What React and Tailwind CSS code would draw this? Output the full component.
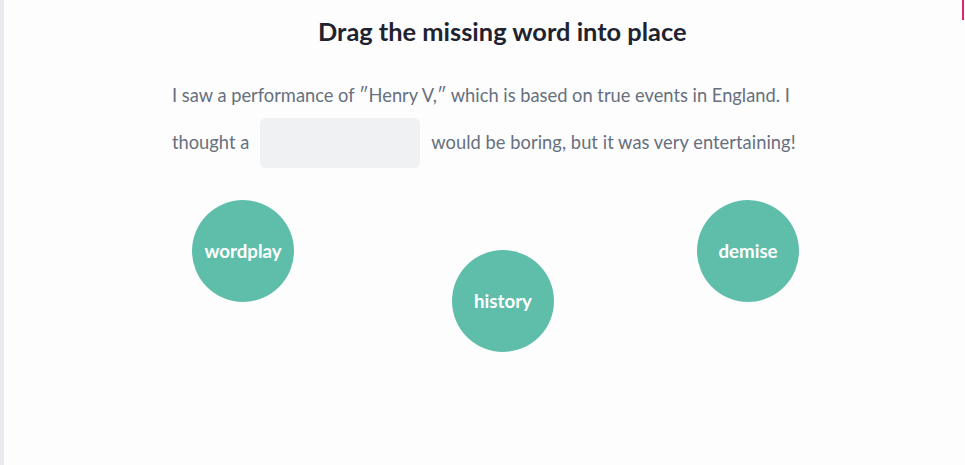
import React from 'react';

const words = [
  { label: 'wordplay', offset: 'ml-[188px] mt-0' },
  { label: 'history', offset: 'ml-[158px] mt-[50px]' },
  { label: 'demise', offset: 'ml-[143px] mt-0' },
];

const App = () => {
  return (
    <div className="relative flex h-[465px] w-[965px] overflow-hidden bg-[#fdfdfd] font-['Lato',sans-serif]">
      {/* left rail */}
      <div className="w-[4px] shrink-0 bg-[#e9ebee]" />

      <div className="flex-1">
        <h1 className="mt-[16px] pl-[314px] text-[25.4px] font-bold leading-[30px] text-[#1f2330]">
          Drag the missing word into place
        </h1>

        <div className="mt-[26px] pl-[168px] text-[18.3px] leading-[47px] text-[#66707e]">
          <p className="whitespace-nowrap">
            I saw a performance of ″Henry V,″ which is based on true events in England. I
          </p>
          <p className="flex h-[47px] items-center whitespace-nowrap">
            <span>thought a</span>
            <span className="ml-[11px] mr-[11px] inline-block h-[50px] w-[160px] shrink-0 rounded-[6px] bg-[#eff1f3]" />
            <span className="tracking-[0.05px]">would be boring, but it was very entertaining!</span>
          </p>
        </div>

        {/* word bubbles */}
        <div className="mt-[34px] flex">
          {words.map((w) => (
            <div
              key={w.label}
              className={`${w.offset} flex h-[102px] w-[102px] shrink-0 items-center justify-center rounded-full bg-[#5fbeaa] text-[18.7px] font-bold text-white`}
            >
              {w.label}
            </div>
          ))}
        </div>
      </div>

      {/* edge marker */}
      <div className="absolute right-[1px] top-0 h-[20px] w-[2px] bg-[#e2246c]" />
    </div>
  );
};

export default App;
